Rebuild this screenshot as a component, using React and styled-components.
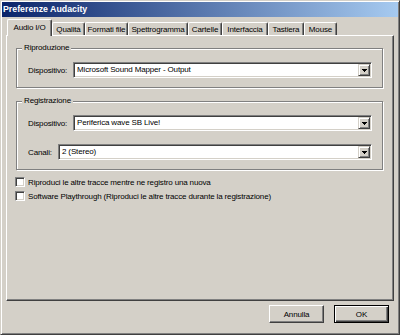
import React from "react";
import styled, { createGlobalStyle } from "styled-components";

const GlobalStyle = createGlobalStyle`
  html, body {
    margin: 0;
    padding: 0;
    background: #d4d0c8;
  }
  body {
    font-family: "Liberation Sans", Arial, sans-serif;
    font-size: 8px;
  }
`;

const Window = styled.div`
  box-sizing: border-box;
  width: 400px;
  height: 335px;
  padding: 1px;
  display: flex;
  flex-direction: column;
  background: #d4d0c8;
  color: #000;
  letter-spacing: -0.15px;
  border: 1px solid;
  border-color: #d4d0c8 #404040 #404040 #d4d0c8;
  box-shadow: inset 1px 1px #fff, inset -1px -1px #808080;
`;

const TitleBar = styled.div`
  height: 15px;
  line-height: 15px;
  padding-left: 1px;
  background: linear-gradient(to right, #0a246a, #a6caf0);
  color: #fff;
  font-weight: bold;
  font-size: 8.8px;
  letter-spacing: 0;
  white-space: nowrap;
`;

const Content = styled.div`
  flex: 1;
  display: flex;
  flex-direction: column;
  padding: 2px 4px 10px;
`;

const TabStrip = styled.div`
  display: flex;
  align-items: flex-end;
  height: 17px;
  margin: 0 0 -1px 1px;
`;

const Tab = styled.div`
  box-sizing: border-box;
  width: ${({ $w }) => $w}px;
  height: ${({ $active }) => ($active ? 17 : 13)}px;
  margin-bottom: ${({ $active }) => ($active ? 0 : 1)}px;
  padding-bottom: ${({ $active }) => ($active ? 2 : 0)}px;
  display: flex;
  align-items: center;
  justify-content: center;
  white-space: nowrap;
  background: #d4d0c8;
  border-top: 1px solid #fff;
  border-left: 1px solid #fff;
  border-right: 1px solid #404040;
  border-radius: 2px 2px 0 0;
  box-shadow: inset -1px 0 #808080;
  position: relative;
  z-index: ${({ $active }) => ($active ? 1 : 0)};
`;

const Panel = styled.div`
  box-sizing: border-box;
  height: 266px;
  display: flex;
  flex-direction: column;
  padding: 7px 10px 0 9px;
  border: 1px solid;
  border-color: #fff #404040 #404040 #fff;
  box-shadow: inset -1px -1px #808080;
`;

const Group = styled.fieldset`
  margin: 0;
  min-width: 0;
  padding: 9px 10px 9px 11px;
  border: 1px solid #808080;
  box-shadow: inset 1px 1px #fff, 1px 1px #fff;

  & + & {
    margin-top: 8px;
  }
`;

const Legend = styled.legend`
  margin-left: -6px;
  padding: 0 2px;
  line-height: 10px;
  background: #d4d0c8;
`;

const Row = styled.div`
  display: flex;
  align-items: center;

  & + & {
    margin-top: 13px;
  }
`;

const Label = styled.span`
  flex: none;
  width: ${({ $w }) => $w}px;
  white-space: nowrap;
`;

const Select = styled.div`
  flex: 1;
  box-sizing: border-box;
  height: 16px;
  padding: 1px;
  display: flex;
  background: #fff;
  border: 1px solid;
  border-color: #808080 #fff #fff #808080;
  box-shadow: inset 1px 1px #404040, inset -1px -1px #d4d0c8;
`;

const SelectText = styled.span`
  flex: 1;
  padding-left: 2px;
  line-height: 12px;
  white-space: nowrap;
  overflow: hidden;
`;

const ArrowButton = styled.span`
  box-sizing: border-box;
  width: 12px;
  height: 12px;
  display: flex;
  align-items: center;
  justify-content: center;
  background: #d4d0c8;
  border: 1px solid;
  border-color: #d4d0c8 #404040 #404040 #d4d0c8;
  box-shadow: inset 1px 1px #fff, inset -1px -1px #808080;
`;

const CheckList = styled.div`
  margin-top: 5px;
  display: flex;
  flex-direction: column;
`;

const CheckRow = styled.label`
  display: flex;
  align-items: center;
  gap: 3px;
  height: 14px;
  white-space: nowrap;
`;

const CheckBox = styled.span`
  box-sizing: border-box;
  width: 10px;
  height: 10px;
  margin-left: -1px;
  background: #fff;
  border: 1px solid;
  border-color: #808080 #fff #fff #808080;
  box-shadow: inset 1px 1px #404040, inset -1px -1px #d4d0c8;
`;

const Footer = styled.div`
  display: flex;
  justify-content: flex-end;
  gap: 10px;
  margin-top: 4px;
  padding-right: 5px;
`;

const Button = styled.div`
  box-sizing: border-box;
  width: 55px;
  height: 18px;
  display: flex;
  align-items: center;
  justify-content: center;
  background: #d4d0c8;
  border: 1px solid;
  border-color: ${({ $default }) =>
    $default ? "#000" : "#fff #404040 #404040 #fff"};
  box-shadow: ${({ $default }) =>
    $default
      ? "inset 1px 1px #fff, inset -1px -1px #404040, inset -2px -2px #808080"
      : "inset -1px -1px #808080"};
`;

const Arrow = () => (
  <svg width="5" height="3" viewBox="0 0 5 3" shapeRendering="crispEdges">
    <path d="M0 0h5v1H0z M1 1h3v1H1z M2 2h1v1H2z" fill="#000" />
  </svg>
);

function Combo({ label, labelWidth, value }) {
  return (
    <Row>
      <Label $w={labelWidth}>{label}</Label>
      <Select>
        <SelectText>{value}</SelectText>
        <ArrowButton>
          <Arrow />
        </ArrowButton>
      </Select>
    </Row>
  );
}

const tabs = [
  { name: "Audio I/O", w: 45, active: true },
  { name: "Qualità", w: 33 },
  { name: "Formati file", w: 43 },
  { name: "Spettrogramma", w: 60 },
  { name: "Cartelle", w: 34 },
  { name: "Interfaccia", w: 46 },
  { name: "Tastiera", w: 36 },
  { name: "Mouse", w: 33 },
];

export default function App() {
  return (
    <>
      <GlobalStyle />
      <Window>
        <TitleBar>Preferenze Audacity</TitleBar>
        <Content>
          <TabStrip>
            {tabs.map((t) => (
              <Tab key={t.name} $w={t.w} $active={t.active}>
                {t.name}
              </Tab>
            ))}
          </TabStrip>
          <Panel>
            <Group>
              <Legend>Riproduzione</Legend>
              <Combo
                label="Dispositivo:"
                labelWidth={45}
                value="Microsoft Sound Mapper - Output"
              />
            </Group>
            <Group>
              <Legend>Registrazione</Legend>
              <Combo
                label="Dispositivo:"
                labelWidth={45}
                value="Periferica wave SB Live!"
              />
              <Combo label="Canali:" labelWidth={30} value="2 (Stereo)" />
            </Group>
            <CheckList>
              <CheckRow>
                <CheckBox />
                Riproduci le altre tracce mentre ne registro una nuova
              </CheckRow>
              <CheckRow>
                <CheckBox />
                Software Playthrough (Riproduci le altre tracce durante la
                registrazione)
              </CheckRow>
            </CheckList>
          </Panel>
          <Footer>
            <Button>Annulla</Button>
            <Button $default>OK</Button>
          </Footer>
        </Content>
      </Window>
    </>
  );
}
